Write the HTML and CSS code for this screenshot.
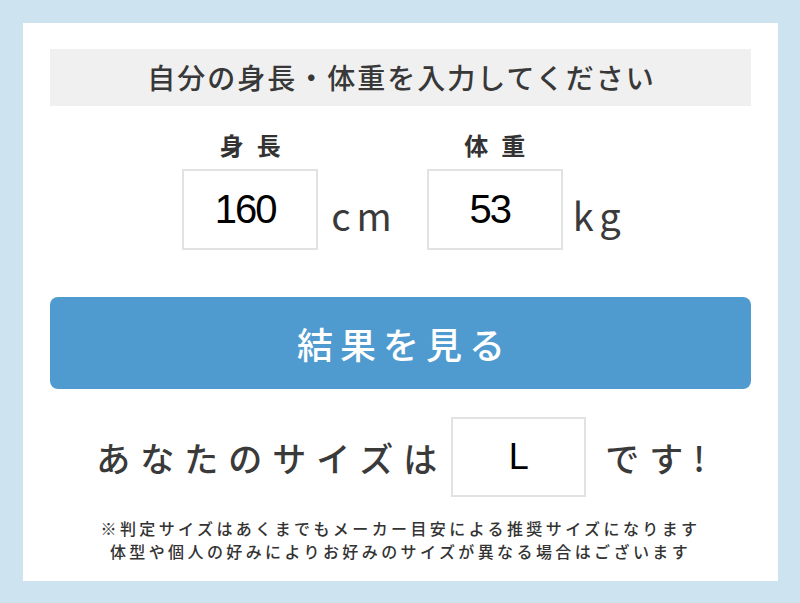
FILE: index.html
```html
<!DOCTYPE html>
<html lang="ja">
<head>
<meta charset="utf-8">
<title>サイズ診断</title>
<link rel="stylesheet" href="styles.css">
</head>
<body>
<div class="card">
  <div class="title">自分の身長・体重を入力してください</div>
  <div class="inputs">
    <div class="field">
      <div class="col">
        <div class="label">身長</div>
        <div class="box num">160</div>
      </div>
      <span class="unit">cm</span>
    </div>
    <div class="field field-kg">
      <div class="col">
        <div class="label">体重</div>
        <div class="box num">53</div>
      </div>
      <span class="unit">kg</span>
    </div>
  </div>
  <button class="btn" type="button">結果を見る</button>
  <div class="result">
    <span class="rtext">あなたのサイズは</span>
    <div class="box rbox">L</div>
    <span class="rtext">です!</span>
  </div>
  <div class="note">
    <p class="note-line">※判定サイズはあくまでもメーカー目安による推奨サイズになります</p>
    <p class="note-line">体型や個人の好みによりお好みのサイズが異なる場合はございます</p>
  </div>
</div>
</body>
</html>
```
FILE: styles.css
```css
* { box-sizing: border-box; }
html, body { margin: 0; padding: 0; }
body {
  background: #cde3f0;
  padding: 23px 0 0 23px;
  font-family: "Noto Sans CJK JP", "Noto Sans", sans-serif;
  color: #333;
}
.card {
  width: 755px;
  height: 558px;
  background: #fff;
  padding: 26px 27px 0 27px;
}
.title {
  height: 57px;
  line-height: 57px;
  background: #f0f0f0;
  text-align: center;
  font-size: 28px;
  font-weight: 500;
  letter-spacing: 2px;
  padding-left: 2px;
  color: #383838;
}
.inputs {
  display: flex;
  justify-content: center;
  gap: 29px;
  margin-top: 24px;
  padding-left: 8px;
}
.field {
  display: flex;
  align-items: flex-end;
  gap: 13px;
}
.field-kg { gap: 10px; }
.col {
  display: flex;
  flex-direction: column;
  align-items: center;
}
.label {
  font-size: 24px;
  font-weight: 700;
  line-height: 30px;
  letter-spacing: 13px;
  padding-left: 13px;
  margin-bottom: 9px;
  color: #333;
}
.box {
  border: 2px solid #e2e2e2;
  background: #fff;
  display: flex;
  align-items: center;
  justify-content: center;
  font-family: "Liberation Sans", Arial, sans-serif;
  color: #000;
}
.num {
  width: 136px;
  height: 81px;
  font-size: 40px;
  letter-spacing: -2px;
  padding-right: 10px;
}
.unit {
  font-size: 38px;
  line-height: 40px;
  letter-spacing: 6px;
  margin-bottom: 15px;
  color: #3a3a3a;
}
.btn {
  display: block;
  width: 100%;
  height: 92px;
  margin-top: 47px;
  border: 0;
  border-radius: 8px;
  background: #4f9bcf;
  color: #fff;
  font-family: "Noto Sans CJK JP", "Noto Sans", sans-serif;
  font-size: 36px;
  font-weight: 500;
  letter-spacing: 7px;
  padding-left: 14px;
}
.result {
  display: flex;
  justify-content: center;
  align-items: center;
  margin-top: 28px;
  padding-left: 10px;
}
.rtext {
  font-size: 34px;
  font-weight: 500;
  letter-spacing: 10px;
  color: #3a3a3a;
}
.rbox {
  width: 135px;
  height: 80px;
  font-size: 36px;
  margin: 0 19px 0 4px;
}
.note {
  margin-top: 20px;
  text-align: center;
  font-size: 16px;
  letter-spacing: 3.4px;
  font-weight: 500;
  color: #333;
}
.note-line {
  margin: 0;
  height: 23px;
  line-height: 23px;
}
```
